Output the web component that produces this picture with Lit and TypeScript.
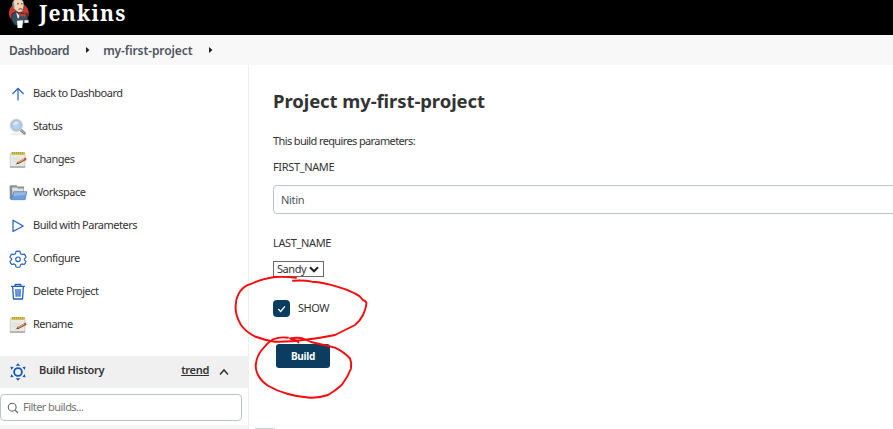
import { LitElement, html, css, svg } from "lit";
import { customElement } from "lit/decorators.js";

const notepad = svg`<rect x="1.2" y="2" width="14.8" height="14.5" rx="1" fill="#e9e9e7" stroke="#c2c2be" stroke-width=".7"/>
  <path d="M1 15.2h15v1.5H1z" fill="#a9a9a4"/><path d="M2.5 1h13v3h-13z" fill="#d8c250"/>
  <path d="M3 2h12.5" stroke="#8a7c30" stroke-width="1" stroke-dasharray="1 1"/>
  <path d="M4 8h7M4 10.5h5" stroke="#d4d4d4" stroke-width=".7"/>
  <path d="M8.5 12.3L16 8.2" stroke="#8f5526" stroke-width="2.3"/><path d="M9 11.6L15.8 7.8" stroke="#e6b272" stroke-width="1.1"/>
  <path d="M15.4 8.5l1.8-1" stroke="#c94f43" stroke-width="2.3"/><path d="M6.3 13.4l2.6-2 .8 1.3z" fill="#55493c"/>`;

const icons: Record<string, unknown> = {
  up: svg`<path d="M9 15.5V3.4M3.4 9L9 3.4 14.6 9" fill="none" stroke="#2a66c0" stroke-width="1.2"/>`,
  status: svg`<ellipse cx="9" cy="16" rx="7" ry="1.3" fill="#ececec"/><path d="M11.3 11.5l4.2 3.8" stroke="#858585" stroke-width="2.8" stroke-linecap="round"/><path d="M11.5 11.5l3.9 3.4" stroke="#c4c4c4" stroke-width="1" stroke-linecap="round"/>
    <circle cx="7.3" cy="7.3" r="5.7" fill="#b4d2f4" stroke="#cdcfd1" stroke-width="1.8"/><circle cx="7.3" cy="7.3" r="4.7" fill="none" stroke="#8fa9c6" stroke-width=".6"/>
    <path d="M4 7a3.5 3.2 0 0 1 6-2.5Q7 7.4 4 7" fill="#dcecfc"/>`,
  notepad,
  folder: svg`<path d="M.5 2.5l1-1.3h6l1 1.3h6.5V13H2z" fill="#8d908d"/><path d="M3 3.4h5l1 1h5.5v7H3z" fill="#dfe1df"/><path d="M.8 3.5V15l2.5 1V6z" fill="#85898d"/>
    <path d="M4.8 7.7h13l-1.7 8H2.4z" fill="#6f9fd8" stroke="#5785c0" stroke-width=".8"/><path d="M5.4 8.3h11.7l-.6 2.6L4.5 12z" fill="#94b9e4"/>`,
  play: svg`<path d="M4 3.2v11.4L14.2 8.9z" fill="none" stroke="#1f5fc0" stroke-width="1.2" stroke-linejoin="round"/>`,
  gear: svg`<path d="M7 1.4Q9 .8 11 1.4L11.5 3.8 13 4.6 15.1 4Q16.8 5.6 17.1 7.3L15.4 8.7V9.9L17.1 11.3Q16.6 13.2 15.1 14.5L13 13.9 11.5 14.8 11 17Q9 17.6 7 17L6.5 14.8 5 13.9 2.9 14.5Q1.4 13.2.9 11.3L2.6 9.9V8.7L.9 7.3Q1.2 5.6 2.9 4L5 4.6 6.5 3.8z" fill="none" stroke="#1f5fc0" stroke-width="1.1" stroke-linejoin="round"/><circle cx="9" cy="9.3" r="2.3" fill="none" stroke="#1f5fc0" stroke-width="1.1"/>`,
  trash: svg`<path d="M2 3.4h14M6.2 3.2V1.5h5.6v1.7M3.6 3.7l.9 12.3h9l.9-12.3M6.9 6l.3 7.8M9 6v7.8M11.1 6l-.3 7.8" fill="none" stroke="#1f5fc0" stroke-width="1.3" stroke-linejoin="round"/>`,
  history: svg`<circle cx="9" cy="9" r="3.9" fill="none" stroke="#1558b4" stroke-width="1.8"/>
    <path d="M9 .3l2.3 2.5H6.7zM9 17.7l2.3-2.5H6.7zM1.4 3.8l3.2.2-2.2 3.1zM16.6 3.8l-3.2.2 2.2 3.1zM1.4 14.2l3.2-.2-2.2-3.1zM16.6 14.2l-3.2-.2 2.2-3.1z" fill="#1558b4"/>`,
};

const tasks: [string, string][] = [
  ["up", "Back to Dashboard"],
  ["status", "Status"],
  ["notepad", "Changes"],
  ["folder", "Workspace"],
  ["play", "Build with Parameters"],
  ["gear", "Configure"],
  ["trash", "Delete Project"],
  ["notepad", "Rename"],
];

const icon = (name: string) => html`<svg class="icon" viewBox="0 0 18 18">${icons[name]}</svg>`;

@customElement("app-root")
export class AppRoot extends LitElement {
  static styles = css`
    :host { display: block; position: relative; width: 893px; height: 429px; overflow: hidden; background: #fff; color: #333;
      font: 11px/16px "Noto Sans", sans-serif; letter-spacing: -0.3px; white-space: nowrap; }
    * { box-sizing: border-box; }
    svg { display: block; flex: none; }
    header { height: 35px; background: #000; display: flex; padding-left: 8px; }
    .brand { color: #fff; font: bold 21px/26px "Noto Serif", "Liberation Serif", serif; margin-left: 9px; letter-spacing: 1.2px; }
    .crumbs { height: 30px; background: #f8f8f8; display: flex; align-items: center; padding: 1px 0 0 9px; color: #4d545d; font-size: 12px; font-weight: 600; letter-spacing: -0.1px; }
    .crumbs .root { letter-spacing: -0.4px; }
    .crumbs svg { margin: -2px 13px 0 17px; }
    .body { display: flex; height: 364px; }
    aside { flex: none; width: 249px; border-right: 1px solid #f0f0f0; padding-top: 12px; }
    .task { height: 33px; display: flex; align-items: center; padding-left: 9px; }
    .task span { margin: -1px 0 0 6px; letter-spacing: -0.48px; }
    .icon { width: 18px; height: 18px; }
    .history { height: 32px; margin-top: 15px; background: #f0f0f0; display: flex; align-items: center; padding: 0 19px 0 9px; font-weight: 600; }
    .history .title { margin: -4px auto 0 12px; }
    .history .trend { margin: -4px 10px 0 0; text-decoration: underline; }
    .filter { width: 242px; height: 27px; margin: 6px 0 4px; border: 1px solid #b9c5cb; border-radius: 4px; display: flex; align-items: center; padding-left: 6px; color: #737373; }
    .filter span { margin: -2px 0 0 4px; letter-spacing: -0.55px; }
    .line { height: 4px; background: #f4f4f4; }
    main { flex: 1; min-width: 0; padding: 23px 0 0 24px; display: flex; flex-direction: column; align-items: flex-start; }
    h1 { margin: 0; font-size: 18.5px; line-height: 26px; font-weight: 700; letter-spacing: -0.08px; }
    .intro { margin-top: 19px; letter-spacing: -0.62px; }
    .label { margin-top: 10px; letter-spacing: -0.36px; }
    .input { flex: none; width: 640px; height: 29px; margin-top: 10px; border: 1px solid #b9c5cb; border-radius: 4px; padding: 6px 7px; color: #4d545d; }
    .label.last { margin-top: 21px; }
    .select { width: 51px; height: 16px; margin-top: 10px; border: 1px solid #6b6b6b; display: flex; align-items: center; padding: 0 4px 0 3px; justify-content: space-between; line-height: 14px; letter-spacing: -0.45px; }
    .check { display: flex; align-items: center; margin-top: 23px; height: 17px; letter-spacing: -0.45px; }
    .check span { margin-top: -2px; }
    .box { width: 17px; height: 17px; border-radius: 4px; background: #0b3d61; margin-right: 8px; }
    .build { width: 54px; height: 24px; border-radius: 3px; background: #0b3d61; color: #fff; font-weight: 700; font-size: 10px; line-height: 24px; text-align: center; margin: 27px 0 0 3px; }
    .stub { width: 20px; height: 2px; background: #c7d0d5; margin: 60px 0 0 -18px; }
    .marks { position: absolute; left: 0; top: 0; pointer-events: none; }
  `;

  render() {
    return html`
      <header>
        <svg width="22" height="30" viewBox="0 0 22 30">
          <circle cx="10.8" cy="13" r="10" fill="#d33833" />
          <path d="M4 13.5l4-1.5 6 1 5 .5 1.5 8.5-5 1.5-2 2.5-7-1-3-5z" fill="#335061" stroke="#16232b" stroke-width=".7" />
          <path d="M4.3 3Q6-2 11-1q5 0 5 6l-.5 5q-2 3-5 2.5-4-2-5.5-5z" fill="#f0d6b7" stroke="#35241c" stroke-width=".6" />
          <path d="M4.2 3l1.6-1 .7 6-1.6 1z" fill="#8d8886" />
          <path d="M9 3.8h2M13 3.8h1.6M10.5 9.3q2-1 4.3 0" stroke="#5b4438" stroke-width="1" fill="none" />
          <path d="M8 12l3.6 4-1.6 3z" fill="#f7f7f7" />
          <path d="M11 13l3 1.5L17.5 13v4l-3.5-1-3 1z" fill="#d33833" />
          <path d="M9 20.8l6-.6-.8 7.8H9.6z" fill="#fff" /><path d="M16.5 20l4 .3v2.4l-4 .3z" fill="#e9e9e9" />
        </svg>
        <div class="brand">Jenkins</div>
      </header>
      <nav class="crumbs">
        <span class="root">Dashboard</span><svg width="4" height="6"><path d="M0 0l3.5 3L0 6z" fill="#222" /></svg>
        <span>my-first-project</span><svg width="4" height="6"><path d="M0 0l3.5 3L0 6z" fill="#222" /></svg>
      </nav>
      <div class="body">
        <aside>
          ${tasks.map(([name, label]) => html`<div class="task">${icon(name)}<span>${label}</span></div>`)}
          <div class="history">
            ${icon("history")}<span class="title">Build History</span><span class="trend">trend</span>
            <svg width="10" height="8"><path d="M1 6.5L5 2l4 4.5" fill="none" stroke="#333" stroke-width="1.5" /></svg>
          </div>
          <div class="filter">
            <svg width="12" height="12"><circle cx="5.2" cy="5.2" r="3.9" fill="none" stroke="#666" stroke-width="1.1" /><path d="M8 8l3 3" stroke="#666" stroke-width="1.1" /></svg>
            <span>Filter builds...</span>
          </div>
          <div class="line"></div>
        </aside>
        <main>
          <h1>Project my-first-project</h1>
          <div class="intro">This build requires parameters:</div>
          <div class="label">FIRST_NAME</div>
          <div class="input">Nitin</div>
          <div class="label last">LAST_NAME</div>
          <div class="select"><span>Sandy</span><svg width="10" height="7"><path d="M1 1.3l4 4 4-4" fill="none" stroke="#222" stroke-width="2" /></svg></div>
          <div class="check">
            <svg class="box" viewBox="0 0 17 17"><path d="M5.3 9l2.4 2.5 4.2-5.2" fill="none" stroke="#fff" stroke-width="1.3" /></svg>
            <span>SHOW</span>
          </div>
          <div class="build">Build</div>
          <div class="stub"></div>
        </main>
      </div>
      <svg class="marks" width="893" height="429" fill="none" stroke="#f9080c" stroke-width="1.9" stroke-linejoin="round" stroke-linecap="round">
        <path d="M296 277.7Q285 276.5 275 277Q261 279 251 284Q245 285 240 291.5Q236 298 236 303Q234 313 241 325Q246 332 255 336.5Q264 340 275 341.7Q290 342 305 339.7Q321 338 335 335Q345 330 355 325Q360 321 363 315Q366 309 366.5 303Q366 301 363 300Q359 295 355 293.5Q346 289 337 286.7Q325 282.5 312 281.7Q305 280 293 280.7" />
        <path d="M298.5 342.5Q297 340 290 338.5Q297 337 303 338.5L311 342Q324 345 335 347.7Q344 352 350 358.5Q352 363 351 368.5Q348 377 341.7 385Q335 391 328 395Q319 398 310 397.7Q298 397 288 394Q277 391 268 385.7Q261 381 258 375Q255 369 256 363Q257 356 261.7 350Q267 343 273 339.3Q280 336.5 288 337.7" />
      </svg>
    `;
  }
}
